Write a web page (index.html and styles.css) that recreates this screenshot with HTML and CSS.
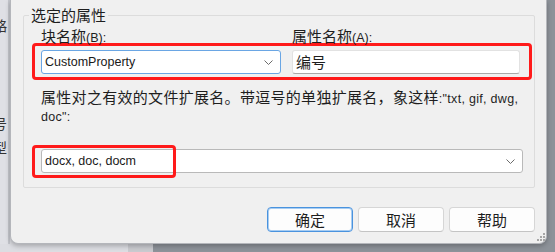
FILE: index.html
```html
<!DOCTYPE html>
<html lang="zh">
<head>
    <meta charset="UTF-8">
    <title>块属性</title>
    <link rel="stylesheet" href="styles.css">
</head>
<body>
    <div class="screen">
        <div class="parent">
            <span class="frag f1">略</span>
            <span class="frag f2">号</span>
            <span class="frag f3">型</span>
        </div>

        <div class="dialog">
            <fieldset class="group">
                <legend>选定的属性</legend>
                <div class="labels">
                    <label class="lbl lbl-block">块名称<span class="en">(B):</span></label>
                    <label class="lbl">属性名称<span class="en">(A):</span></label>
                </div>
                <div class="mark-row">
                    <div class="combo focus block-combo">
                        <span class="en value">CustomProperty</span>
                        <svg class="chev" width="9" height="5" viewBox="0 0 9 5"><path d="M0.5 0.5 L4.5 4.5 L8.5 0.5" fill="none" stroke="#6b6b6b" stroke-width="1"/></svg>
                    </div>
                    <div class="textbox">编号</div>
                </div>
                <p class="desc">属性对之有效的文件扩展名。带逗号的单独扩展名，象这样<span class="en">:"txt, gif, dwg, doc":</span></p>
                <div class="ext-wrap">
                    <div class="combo ext-combo">
                        <span class="en value">docx, doc, docm</span>
                        <svg class="chev" width="9" height="5" viewBox="0 0 9 5"><path d="M0.5 0.5 L4.5 4.5 L8.5 0.5" fill="none" stroke="#6b6b6b" stroke-width="1"/></svg>
                    </div>
                    <div class="mark mark-ext"></div>
                </div>
            </fieldset>

            <div class="actions">
                <button class="btn default">确定</button>
                <button class="btn">取消</button>
                <button class="btn">帮助</button>
            </div>

            <svg class="grip" width="10" height="10" viewBox="0 0 10 10">
                <rect x="8" y="2" width="2" height="2" fill="#a6a6a6"/>
                <rect x="5" y="5" width="2" height="2" fill="#a6a6a6"/>
                <rect x="8" y="5" width="2" height="2" fill="#a6a6a6"/>
                <rect x="2" y="8" width="2" height="2" fill="#a6a6a6"/>
                <rect x="5" y="8" width="2" height="2" fill="#a6a6a6"/>
                <rect x="8" y="8" width="2" height="2" fill="#a6a6a6"/>
            </svg>
        </div>
    </div>
</body>
</html>
```

FILE: styles.css
```css
body {
    margin: 0;
    font-family: "Noto Sans CJK SC", "Liberation Sans", sans-serif;
    font-size: 15px;
    color: #1e1e1e;
    background: linear-gradient(to right, #dcdde2 0, #dcdde2 128px, #c9cacf 128px, #c9cacf 153px, #8d9299 153px);
}

.screen {
    display: flex;
    width: 555px;
    height: 252px;
    overflow: hidden;
}

.en {
    font-family: "Liberation Sans", sans-serif;
    font-size: 12.5px;
    line-height: 1;
}

/* parent window behind the dialog */
.parent {
    width: 10px;
    flex-shrink: 0;
    display: flex;
    flex-direction: column;
    padding-top: 18px;
    overflow: hidden;
    background: linear-gradient(to right, #dfe0e5 0, #dfe0e5 8px, #c4c6cc 8px);
    height: 244px;
    box-sizing: border-box;
}

.frag {
    font-size: 14px;
    line-height: 15px;
    margin-left: -7px;
    color: #333;
}

.f2 {
    margin-top: 83px;
}

.f3 {
    margin-top: 9px;
}

.dialog {
    position: relative;
    width: 537px;
    height: 244px;
    flex-shrink: 0;
    box-sizing: border-box;
    background: #f0f0f0;
    border: 1px solid #b4b6bb;
    border-top: none;
    border-radius: 0 0 8px 8px;
    box-shadow: 0 2px 5px rgba(0, 0, 0, 0.25);
    padding: 6px 11px 0 12px;
}

.group {
    margin: 0;
    min-width: 0;
    padding: 0 2px 14px 8px;
    border: 1px solid #dcdcdc;
    border-radius: 2px;
}

.group legend {
    padding: 0 2px;
    margin-left: -3px;
    line-height: 18px;
}

.labels {
    display: flex;
    margin-top: 4px;
    padding-left: 9px;
    line-height: 15px;
    height: 15px;
}

.lbl-block {
    width: 251px;
    flex-shrink: 0;
}

.mark-row {
    display: flex;
    gap: 11px;
    border: 3px solid #ff1a1a;
    border-radius: 4px;
    padding: 4px 9px 3px 6px;
}

.combo {
    height: 24px;
    box-sizing: border-box;
    background: #fff;
    border: 1px solid #b9b9b9;
    border-radius: 3px;
    display: flex;
    align-items: center;
    justify-content: space-between;
    padding: 0 7px 0 3px;
}

.combo .value {
    color: #1a1a1a;
}

.focus {
    border-color: #6aa6e4;
}

.block-combo {
    width: 240px;
}

.textbox {
    width: 228px;
    height: 24px;
    box-sizing: border-box;
    background: #fff;
    border: 1px solid #e2e2e2;
    border-bottom-color: #a9a9a9;
    border-radius: 3px;
    padding-left: 3px;
    line-height: 22px;
}

.desc {
    margin: 8px 0 0 9px;
    line-height: 17px;
    letter-spacing: 0.3px;
}

.ext-wrap {
    position: relative;
    margin-top: 26px;
    padding-left: 9px;
}

.ext-combo {
    width: 482px;
}

.mark-ext {
    position: absolute;
    left: 0;
    top: -4px;
    width: 144px;
    height: 33px;
    box-sizing: border-box;
    border: 3px solid #ff1a1a;
    border-radius: 4px;
}

.actions {
    display: flex;
    justify-content: flex-end;
    gap: 5px;
    margin-top: 19px;
}

.btn {
    width: 86px;
    height: 25px;
    font-family: "Noto Sans CJK SC", sans-serif;
    font-size: 15px;
    color: #1e1e1e;
    background: #fdfdfd;
    border: 1px solid #d6d6d6;
    border-bottom-color: #c4c4c4;
    border-radius: 4px;
    padding: 0;
    line-height: 22px;
}

.btn.default {
    border-color: #4a93de;
    box-shadow: inset 0 0 0 1px #a8cdf2;
}

.grip {
    position: absolute;
    right: 1px;
    bottom: 2px;
}
```
